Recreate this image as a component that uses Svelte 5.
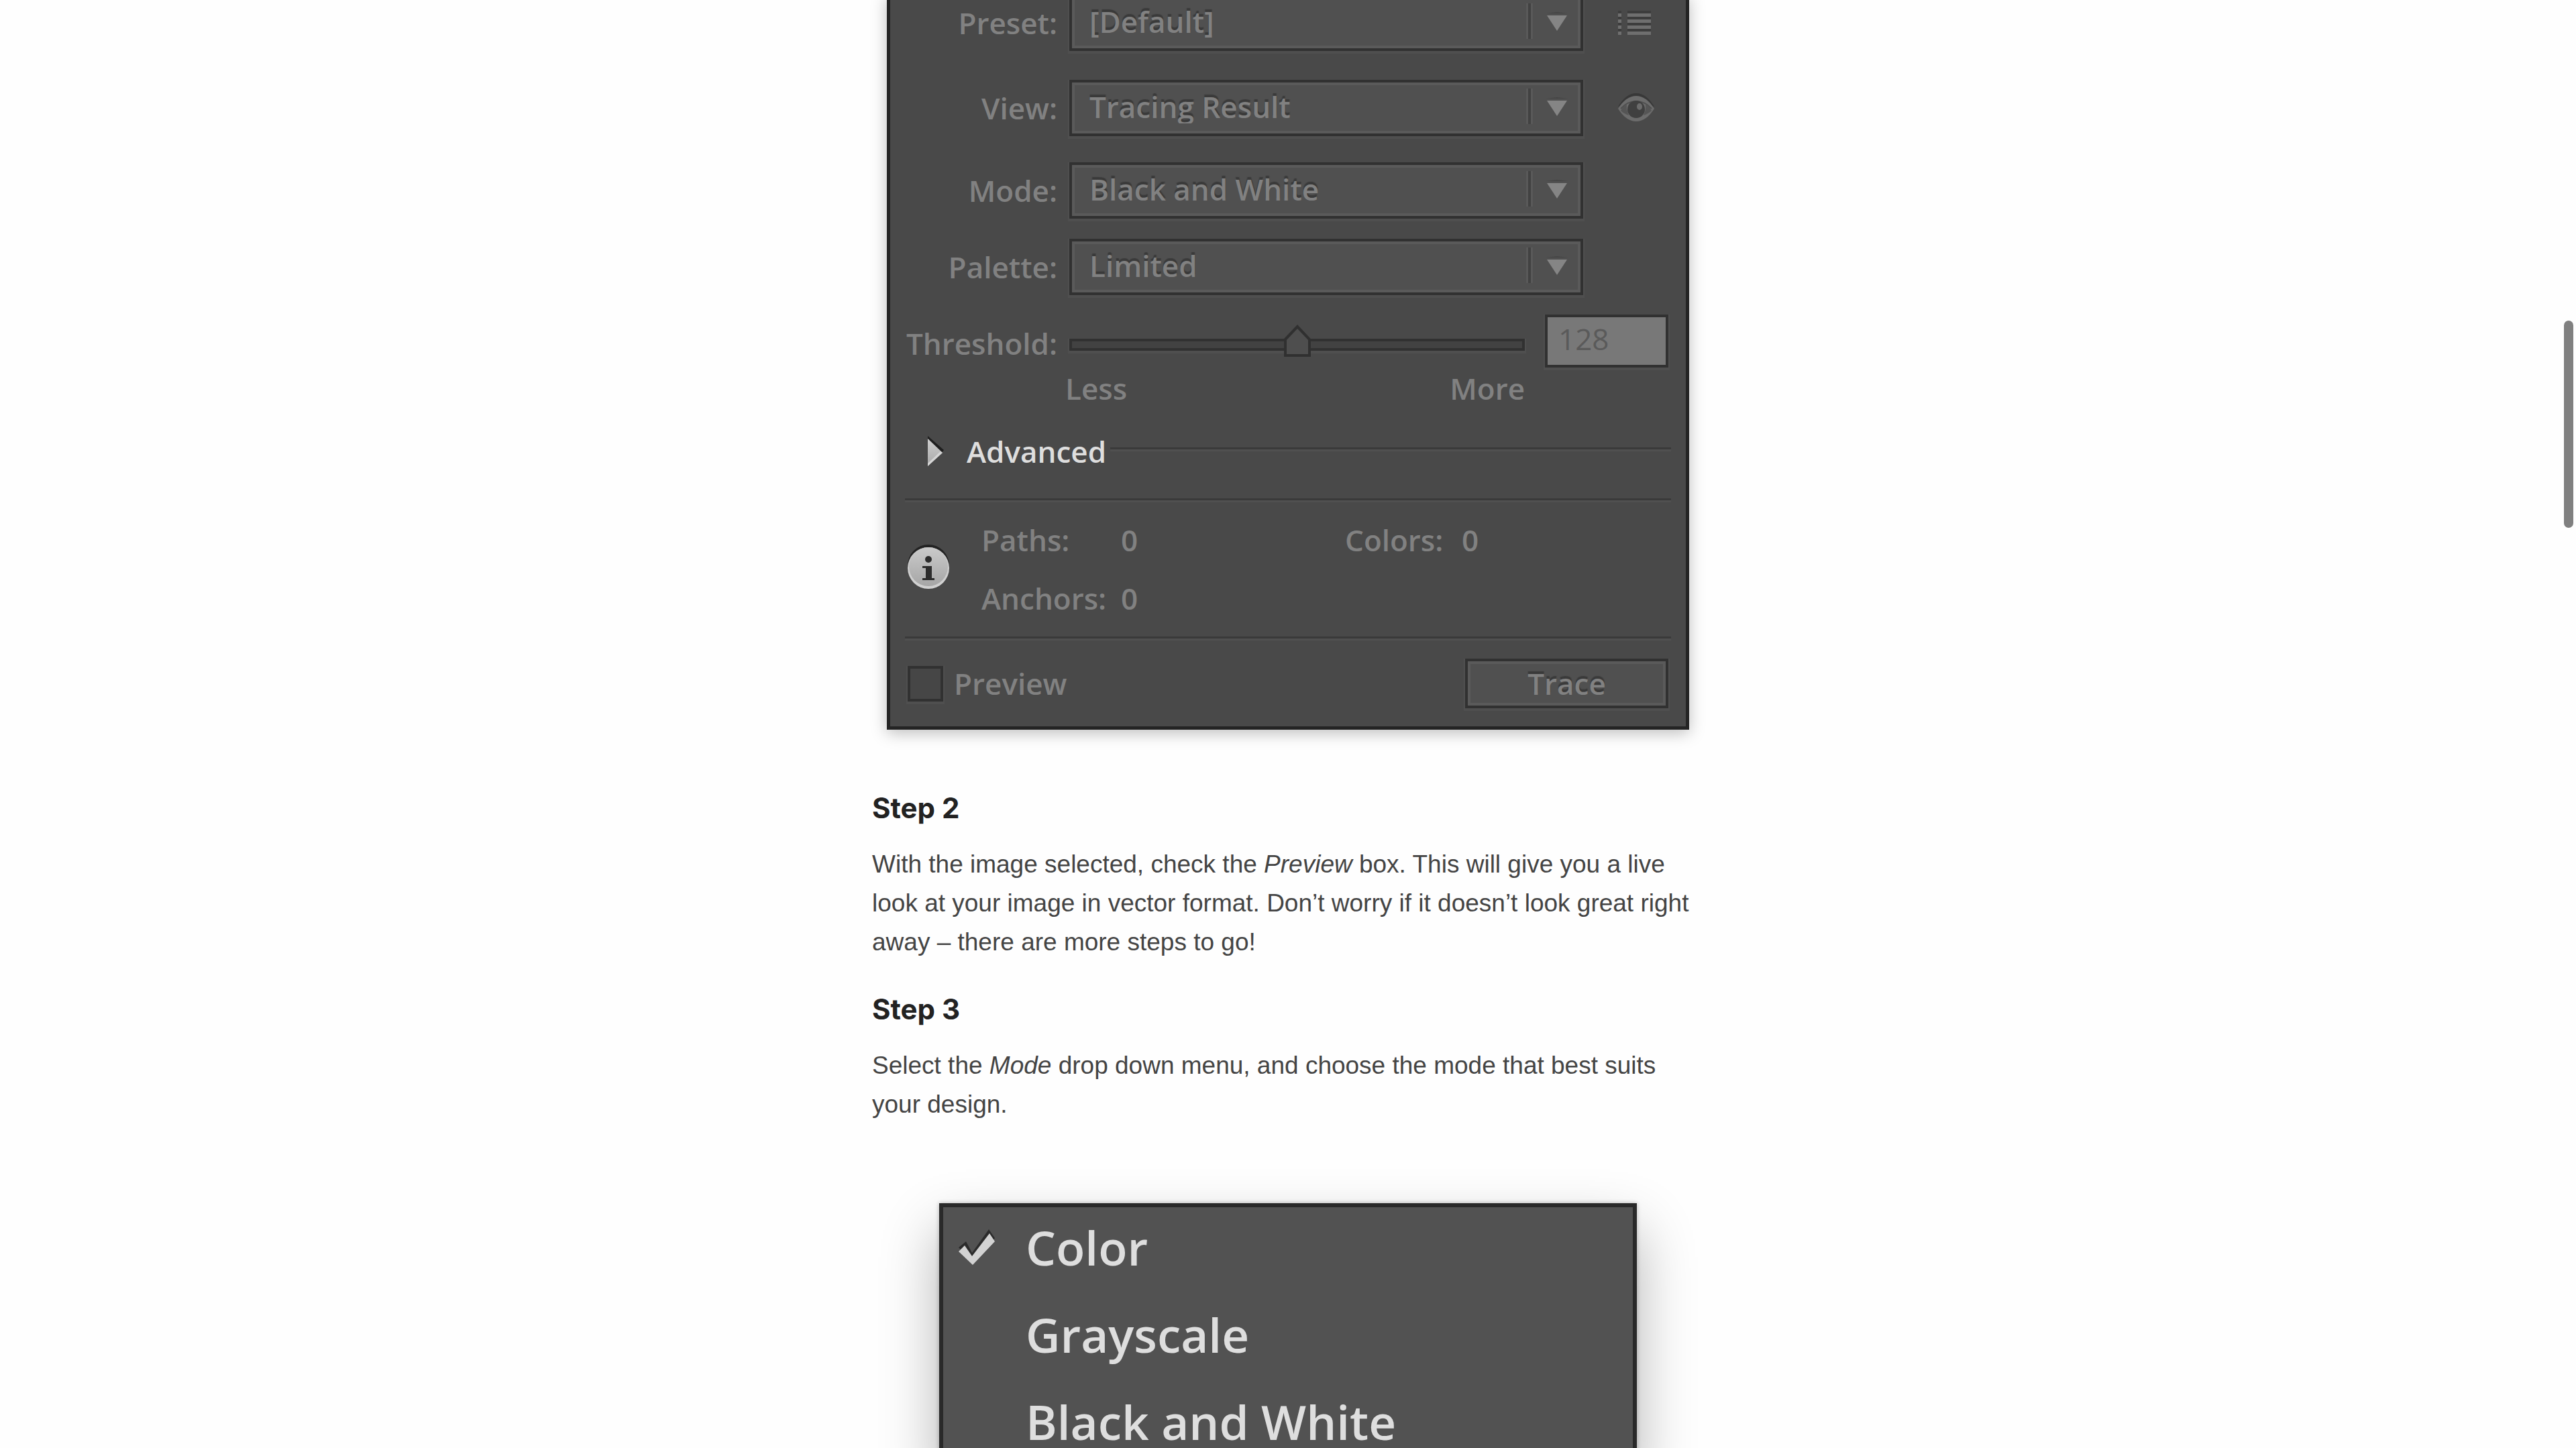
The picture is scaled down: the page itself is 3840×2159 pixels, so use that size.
<script>
  let preset = $state('[Default]');
  let view = $state('Tracing Result');
  let mode = $state('Black and White');
  let palette = $state('Limited');
  let threshold = $state(128);
  let preview = $state(false);

  const modes = ['Color', 'Grayscale', 'Black and White'];
</script>

{#snippet arrow()}
  <svg class="arrow" viewBox="0 0 86 84" aria-hidden="true">
    <path d="M1 13h3v53h-3zM8 13h3v53h-3z" fill="#595959" />
    <path d="M4 13h4v53h-4z" fill="#424242" />
    <path d="M31 28h32L47 26z" fill="#454545" />
    <path d="M32 31h30L47 54z" fill="#858585" />
  </svg>
{/snippet}

<main class="page">
  <article class="article">
    <section class="panel" aria-label="Image Trace">
      <div class="row preset">
        <label for="preset">Preset:</label>
        <div class="field">
          <select id="preset" bind:value={preset}><option>[Default]</option></select>
          {@render arrow()}
        </div>
        <button class="icon" aria-label="Manage presets">
          <svg class="list" viewBox="0 0 50 36" aria-hidden="true">
            <path d="M0 0h5v4H0zM14 0h35v4H14zM0 9h5v4H0zM14 9h35v4H14zM0 18h5v4H0zM14 18h35v4H14zM0 27h5v4H0zM14 27h35v4H14z" fill="#3d3d3d" />
            <path d="M0 4h5v5H0zM14 4h35v5H14zM0 13h5v5H0zM14 13h35v5H14zM0 22h5v5H0zM14 22h35v5H14zM0 31h5v5H0zM14 31h35v5H14z" fill="#6f6f6f" />
          </svg>
        </button>
      </div>
      <div class="row view">
        <label for="view">View:</label>
        <div class="field">
          <select id="view" bind:value={view}><option>Tracing Result</option></select>
          {@render arrow()}
        </div>
        <button class="icon" aria-label="Toggle view">
          <svg class="eye" viewBox="0 0 54 42" aria-hidden="true">
            <path d="M0 19Q12 -1 27 -1T54 19L27 12Z" fill="#383838" />
            <path d="M0 22Q12 3 27 3T54 22Q42 41 27 41T0 22Z" fill="#6c6c6c" />
            <path d="M4 25Q7 19 13 16Q12 23 16 32Q8 29 4 25ZM50 25Q47 19 41 16Q42 23 38 32Q46 29 50 25Z" fill="#555" />
            <path d="M4 22Q14 11 27 11T50 22" fill="none" stroke="#505050" stroke-width="2" />
            <ellipse cx="27" cy="23" rx="13" ry="13" fill="#404040" />
            <ellipse cx="32" cy="19" rx="4" ry="5" fill="#6c6c6c" />
          </svg>
        </button>
      </div>
      <div class="row mode">
        <label for="mode">Mode:</label>
        <div class="field">
          <select id="mode" bind:value={mode}>
            {#each modes as item}<option>{item}</option>{/each}
          </select>
          {@render arrow()}
        </div>
      </div>
      <div class="row palette">
        <label for="palette">Palette:</label>
        <div class="field">
          <select id="palette" bind:value={palette}><option>Limited</option></select>
          {@render arrow()}
        </div>
      </div>

      <div class="threshold">
        <label for="threshold">Threshold:</label>
        <input id="threshold" class="slider" type="range" min="0" max="256" bind:value={threshold} />
        <input class="number" type="text" aria-label="Threshold value" bind:value={threshold} />
        <div class="scale"><span>Less</span><span>More</span></div>
      </div>

      <button class="advanced">
        <svg class="disclosure" viewBox="0 0 24 46" aria-hidden="true">
          <defs>
            <linearGradient id="tri" x1="0" y1="0" x2="0" y2="1">
              <stop offset="0" stop-color="#cfcfcf" /><stop offset="1" stop-color="#a8a8a8" />
            </linearGradient>
          </defs>
          <path d="M0 0L24 21L20 26L0 6Z" fill="#1f1f1f" />
          <path d="M0 4L22 25L0 45Z" fill="url(#tri)" />
          <path d="M22 25L0 45V41L19 23Z" fill="#d6d6d6" />
        </svg>
        <span>Advanced</span>
        <i class="rule"></i>
      </button>

      <div class="stats">
        <svg class="info" viewBox="0 0 62 66" aria-hidden="true">
          <defs>
            <linearGradient id="disc" x1="0" y1="0" x2="0" y2="1">
              <stop offset="0" stop-color="#cacaca" /><stop offset="1" stop-color="#a6a6a6" />
            </linearGradient>
          </defs>
          <circle cx="31" cy="31" r="31" fill="#232323" />
          <circle cx="31" cy="35" r="31" fill="#d0d0d0" />
          <circle cx="31" cy="33" r="29" fill="url(#disc)" />
          <circle cx="31" cy="22" r="5" fill="#2c2c2c" />
          <path d="M22 32h14v18h4v3H22v-3h5V35h-5z" fill="#2c2c2c" />
        </svg>
        <dl>
          <dt>Paths:</dt><dd>0</dd>
          <dt>Colors:</dt><dd>0</dd>
          <dt>Anchors:</dt><dd>0</dd>
        </dl>
      </div>

      <div class="actions">
        <label class="preview"><input type="checkbox" bind:checked={preview} />Preview</label>
        <button class="trace">Trace</button>
      </div>
    </section>

    <h3>Step 2</h3>
    <p>
      With the image selected, check the <em>Preview</em> box. This will give you a live look at your
      image in vector format. Don’t worry if it doesn’t look great right away – there are more steps
      to go!
    </p>
    <h3>Step 3</h3>
    <p>
      Select the <em>Mode</em> drop down menu, and choose the mode that best suits your design.
    </p>

    <ul class="menu">
      {#each modes as item, i}
        <li>
          <button>
            <span class="tick">
              {#if i === 0}
                <svg viewBox="0 0 54 54" aria-hidden="true">
                  <path d="M0 27L11 18L20 35L45 0L54 13L21 49Z" fill="#2b2b2b" />
                  <path d="M0 33L9 24L20 40L46 6L54 18L21 53Z" fill="#d2d2d2" />
                </svg>
              {/if}
            </span>
            {item}
          </button>
        </li>
      {/each}
    </ul>
  </article>
  <div class="scroll-thumb"></div>
</main>

<style>
  :global(body) {
    background: #fefefe;
  }

  .page {
    height: 100vh;
    overflow: hidden;
    position: relative;
    font-family: 'Liberation Sans', Arial, sans-serif;
    color: #444;
  }

  .page * {
    box-sizing: border-box;
  }

  .article {
    max-width: 1240px;
    margin: 0 auto;
  }

  .panel {
    max-width: 1196px;
    margin: -8px auto 0;
    padding: 0 22px 27px;
    border: 5px solid #242424;
    border-top: 0;
    background: #494949;
    box-shadow: 0 5px 22px rgba(0, 0, 0, 0.26);
    color: #818181;
    font: 600 44px/50px 'Open Sans', 'Noto Sans', sans-serif;
  }

  button,
  select,
  input {
    font: inherit;
    color: inherit;
    margin: 0;
    padding: 0;
    border: 0;
    border-radius: 0;
    outline: 0;
    background: none;
    appearance: none;
  }

  .row {
    display: grid;
    grid-template-columns: 227px 766px 1fr;
    column-gap: 18px;
    align-items: center;
  }

  .row label,
  .threshold label {
    text-align: right;
  }

  .view {
    margin-top: 43px;
  }

  .mode {
    margin-top: 39px;
  }

  .palette {
    margin-top: 30px;
  }

  .field {
    display: grid;
  }

  .field select,
  .arrow {
    grid-area: 1 / 1;
  }

  .field select {
    height: 84px;
    padding: 0 100px 4px 26px;
  }

  .field select,
  .trace {
    border: 4px solid #313131;
    background: #505050;
    box-shadow:
      inset 0 0 0 4px #5a5a5a,
      0 2px 0 2px #4f4f4f;
    text-shadow: 0 -4px 1px #3a3a3a;
  }

  .arrow {
    width: 86px;
    height: 84px;
    justify-self: end;
    pointer-events: none;
  }

  .icon {
    display: flex;
    padding-left: 34px;
  }

  .list {
    width: 50px;
    height: 36px;
  }

  .eye {
    width: 54px;
    height: 42px;
    overflow: visible;
  }

  .threshold {
    display: grid;
    grid-template-columns: 227px 679px 184px;
    column-gap: 18px;
    row-gap: 6px;
    align-items: center;
    margin-top: 29px;
  }

  .threshold label {
    padding-top: 6px;
  }

  .slider {
    height: 58px;
    padding-top: 10px;
  }

  .slider::-webkit-slider-runnable-track {
    height: 18px;
    border: 4px solid #313131;
    background: #424242;
    box-shadow: 0 2px 0 2px #4f4f4f;
  }

  .slider::-webkit-slider-thumb {
    appearance: none;
    width: 40px;
    height: 50px;
    margin-top: -25px;
    background: url("data:image/svg+xml,%3Csvg xmlns='http://www.w3.org/2000/svg' viewBox='0 0 40 50'%3E%3Cpath d='M2 22L20 3L38 22V46H2Z' fill='%234e4e4e' stroke='%23303030' stroke-width='4'/%3E%3C/svg%3E");
  }

  .number {
    width: 184px;
    height: 79px;
    margin-left: 12px;
    padding: 0 16px 8px;
    border: 4px solid #313131;
    background: #787878;
    box-shadow: 0 2px 0 2px #4f4f4f;
    color: #5a5a5a;
    font-weight: 400;
  }

  .scale {
    grid-column: 2;
    display: flex;
    justify-content: space-between;
    margin-left: -6px;
  }

  .advanced {
    display: flex;
    align-items: center;
    width: 100%;
    margin-top: 44px;
    padding-left: 34px;
    color: #dedede;
  }

  .disclosure {
    width: 24px;
    height: 46px;
    margin-right: 34px;
  }

  .rule {
    flex: 1;
    height: 6px;
    margin: 0 0 6px 6px;
    border-top: 3px solid #3a3a3a;
    border-bottom: 3px solid #505050;
  }

  .stats {
    display: flex;
    align-items: center;
    margin-top: 45px;
    padding: 34px 4px 32px;
    border-top: 3px solid #3a3a3a;
    border-bottom: 3px solid #3a3a3a;
    box-shadow:
      inset 0 3px 0 #505050,
      0 3px 0 #505050;
  }

  .info {
    width: 62px;
    height: 66px;
    margin: 0 48px 8px 0;
  }

  dl {
    display: grid;
    grid-template-columns: 208px 334px 174px 1fr;
    row-gap: 37px;
    margin: 0;
  }

  dd {
    margin: 0;
  }

  .actions {
    display: flex;
    justify-content: space-between;
    align-items: center;
    margin-top: 30px;
    padding: 0 4px;
  }

  .preview {
    display: flex;
    align-items: center;
    gap: 16px;
  }

  .preview input {
    width: 53px;
    height: 53px;
    border: 4px solid #313131;
    background: #464646;
    box-shadow: 0 2px 0 2px #4f4f4f;
  }

  .trace {
    width: 303px;
    height: 74px;
  }

  h3 {
    margin: 88px 0 0;
    color: #222;
    font: 700 42px/58px Inter, sans-serif;
  }

  p {
    margin: 26px 0 0;
    font-size: 37px;
    line-height: 58px;
  }

  p + h3 {
    margin-top: 42px;
  }

  .menu {
    display: flex;
    flex-direction: column;
    gap: 10px;
    max-width: 1040px;
    margin: 118px auto 0;
    padding: 0;
    border: 6px solid #292929;
    background: #525252;
    box-shadow:
      0 0 6px rgba(0, 0, 0, 0.3),
      0 40px 80px rgba(0, 0, 0, 0.3);
    color: #dedede;
    font: 600 71px/120px 'Open Sans', 'Noto Sans', sans-serif;
    list-style: none;
  }

  .menu button {
    display: flex;
    align-items: center;
    width: 100%;
    padding-left: 23px;
    text-align: left;
  }

  .tick {
    width: 100px;
  }

  .tick svg {
    display: block;
    width: 54px;
    height: 54px;
  }

  .scroll-thumb {
    position: absolute;
    top: 478px;
    right: 4px;
    width: 14px;
    height: 309px;
    border-radius: 7px;
    background: #808080;
  }
</style>
